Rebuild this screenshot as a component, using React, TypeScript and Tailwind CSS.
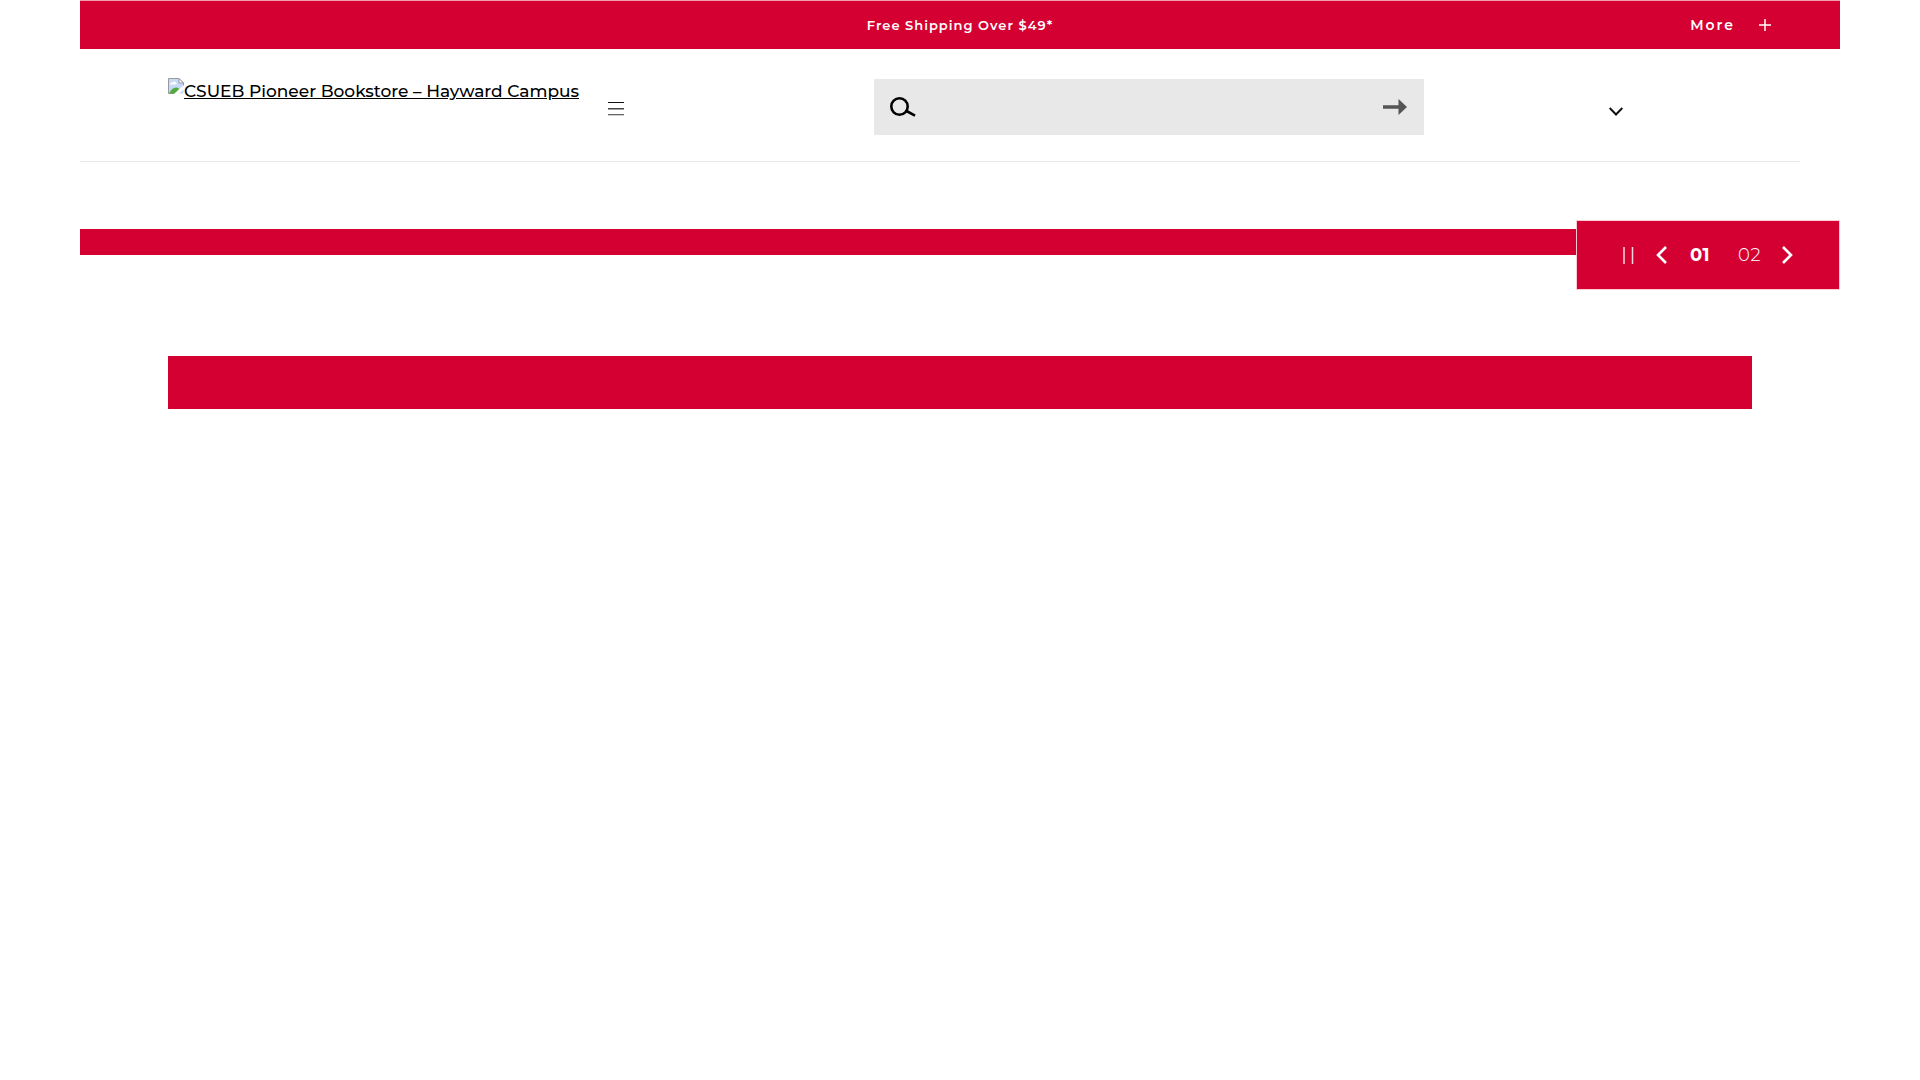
import React, { useState } from 'react';

const slides = ['01', '02'];

function BrokenImageIcon() {
  return (
    <svg className="w-4 h-4 shrink-0" viewBox="0 0 16 16" aria-hidden="true">
      <path d="M0.5 0.5H11L15.5 5V9L7 15.5H0.5Z" fill="#c6d9f7" stroke="#9a9a9a" />
      <path d="M2 6.5C2 4.5 4 4.5 4.5 4.5C5 3 7.5 3 8 5C9 5 9 6.5 8 6.5Z" fill="#fff" />
      <path d="M1 15.5C3 11 6 9 9 9.5L11.5 11L6.5 15.5Z" fill="#53a93f" />
      <path d="M16 7L6 16H10L16 11Z" fill="#fff" />
      <path d="M11 0.5V5H15.5Z" fill="#fff" stroke="#9a9a9a" />
      <path d="M11 15.5H15.5V11.5Z" fill="#c6d9f7" />
    </svg>
  );
}

function PromoBar() {
  return (
    <div className="relative flex h-[49px] items-center justify-center border-t border-[#f29fb2] bg-[#d50032] text-white">
      <p className="text-[13px] leading-6 font-semibold tracking-[1px]">Free Shipping Over $49*</p>
      <button type="button" className="absolute right-[69px] flex items-center gap-6 text-[14px] leading-6 font-semibold tracking-[2px]">
        More
        <svg className="w-3 h-3" viewBox="0 0 12 12" fill="none" stroke="currentColor" strokeWidth="1.5" aria-hidden="true">
          <path d="M6 0V12M0 6H12" />
        </svg>
      </button>
    </div>
  );
}

function Header() {
  return (
    <header className="mr-10 flex h-[113px] border-b border-[#e8e8e8] pl-[88px]">
      <div className="flex min-w-0 flex-1 items-start pt-[29px]">
        <a href="#home" className="flex w-[440px] items-start text-[17px] leading-[26px] font-medium text-black">
          <BrokenImageIcon />
          <span className="whitespace-nowrap underline">CSUEB Pioneer Bookstore – Hayward Campus</span>
        </a>
        <button type="button" aria-label="Menu" className="mt-6">
          <svg className="w-4 h-[14px]" viewBox="0 0 16 14" aria-hidden="true">
            <path d="M0 0H16V1H0Z" fill="#111" />
            <path d="M0 6H16V7.5H0Z" fill="#444" />
            <path d="M0 12H16V13.3H0Z" fill="#666" />
          </svg>
        </button>
      </div>

      <form className="mt-[30px] flex h-14 w-[33.7%] items-center bg-[#e8e8e8] pr-[17px] pl-4" onSubmit={(e) => e.preventDefault()}>
        <label htmlFor="search" aria-label="Search">
          <svg className="w-[26px] h-5" viewBox="0 0 26 20" fill="none" stroke="#000" strokeWidth="2.6" aria-hidden="true">
            <circle cx="9.5" cy="9.5" r="8.2" />
            <path d="M16.5 14L25 18.7" />
          </svg>
        </label>
        <input id="search" type="text" className="h-full min-w-0 flex-1 bg-transparent px-3 text-[17px] outline-none" />
        <button type="submit" aria-label="Submit search">
          <svg className="w-6 h-4" viewBox="0 0 24 16" fill="#555" aria-hidden="true">
            <path d="M0 6.3H15.5V0L24 8L15.5 16V9.7H0Z" />
          </svg>
        </button>
      </form>

      <div className="flex w-[376px] items-start pt-[58px] pl-[185px]">
        <button type="button" aria-label="Account">
          <svg className="w-[14px] h-[9px]" viewBox="0 0 14 9" fill="none" stroke="#111" strokeWidth="2" aria-hidden="true">
            <path d="M0.7 1L7 7.5L13.3 1" />
          </svg>
        </button>
      </div>
    </header>
  );
}

function Carousel() {
  const [active, setActive] = useState('01');

  return (
    <section className="mt-[58px] flex items-start">
      <div className="mt-[9px] h-[26px] flex-1 bg-[#d50032]" />
      <div className="flex h-[70px] w-[264px] items-center border border-[#f9ccd6] bg-[#d50032] pl-[45px] text-white">
        <button type="button" aria-label="Pause">
          <svg className="w-3 h-[17px]" viewBox="0 0 12 17" stroke="#fbd5dd" strokeWidth="1.5" aria-hidden="true">
            <path d="M2 0V17M10.5 0V17" />
          </svg>
        </button>
        <button type="button" aria-label="Previous" className="ml-[22px]">
          <svg className="w-3 h-[18px]" viewBox="0 0 12 18" fill="none" stroke="currentColor" strokeWidth="2.6" aria-hidden="true">
            <path d="M10 1L2 9L10 17" />
          </svg>
        </button>
        <div className="ml-[22px] flex flex-1 gap-[28px]">
          {slides.map((s) => (
            <button
              key={s}
              type="button"
              onClick={() => setActive(s)}
              className={s === active ? 'text-[18px] leading-6 font-bold tracking-wide' : 'text-[18px] leading-6 font-light tracking-wide'}
            >
              {s}
            </button>
          ))}
        </div>
        <button type="button" aria-label="Next" className="mr-[45px]">
          <svg className="w-3 h-[18px]" viewBox="0 0 12 18" fill="none" stroke="currentColor" strokeWidth="2.6" aria-hidden="true">
            <path d="M1 1L9 9L1 17" />
          </svg>
        </button>
      </div>
    </section>
  );
}

export default function App() {
  return (
    <div className="mx-auto w-11/12 bg-white font-[Montserrat,Inter,sans-serif]">
      <PromoBar />
      <Header />
      <main>
        <Carousel />
        <div className="mx-[5%] mt-[66px] h-[53px] bg-[#d50032]" />
      </main>
    </div>
  );
}
